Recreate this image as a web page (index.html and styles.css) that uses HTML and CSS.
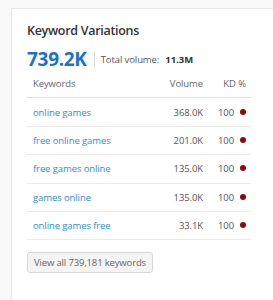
FILE: index.html
```html
<!DOCTYPE html>
<html>
<head>
<meta charset="utf-8">
<link rel="stylesheet" href="styles.css">
</head>
<body>
<div class="card">
  <h2 class="title">Keyword Variations</h2>
  <div class="summary">
    <span class="big">739.2K</span>
    <span class="sep"></span>
    <span class="label">Total volume:</span>
    <span class="total">11.3M</span>
  </div>
  <table class="kw">
    <thead>
      <tr><th class="c-kw">Keywords</th><th class="c-vol">Volume</th><th class="c-kd">KD %</th></tr>
    </thead>
    <tbody>
      <tr><td class="c-kw"><a>online games</a></td><td class="c-vol">368.0K</td><td class="c-kd">100<span class="dot"></span></td></tr>
      <tr><td class="c-kw"><a>free online games</a></td><td class="c-vol">201.0K</td><td class="c-kd">100<span class="dot"></span></td></tr>
      <tr><td class="c-kw"><a>free games online</a></td><td class="c-vol">135.0K</td><td class="c-kd">100<span class="dot"></span></td></tr>
      <tr><td class="c-kw"><a>games online</a></td><td class="c-vol">135.0K</td><td class="c-kd">100<span class="dot"></span></td></tr>
      <tr><td class="c-kw"><a>online games free</a></td><td class="c-vol">33.1K</td><td class="c-kd">100<span class="dot"></span></td></tr>
    </tbody>
  </table>
  <button class="btn">View all 739,181 keywords</button>
</div>
</body>
</html>
```
FILE: styles.css
```css
html, body { margin: 0; padding: 0; }
body {
  background: #f9f9f9;
  font-family: "Open Sans", "Noto Sans", sans-serif;
  color: #333;
  height: 300px;
  overflow: hidden;
}
.card {
  box-sizing: border-box;
  margin: 8px 0 0 11px;
  background: #fff;
  border-top: 1px solid #e6e6e6;
  border-left: 1px solid #e6e6e6;
  padding: 13px 0 0 15px;
  height: 292px;
}
.title {
  margin: 0;
  font-size: 12.5px;
  font-weight: 600;
  line-height: 18px;
  color: #333;
  letter-spacing: -0.3px;
}
.summary {
  display: flex;
  align-items: center;
  margin-top: 8px;
  height: 22px;
}
.big {
  font-size: 19px;
  font-weight: 700;
  color: #1a73c4;
  letter-spacing: -0.3px;
  line-height: 22px;
}
.sep {
  width: 1px;
  height: 15px;
  background: #d8d8d8;
  margin: 0 6px 0 7px;
}
.label {
  font-size: 9.5px;
  color: #555;
  letter-spacing: -0.1px;
}
.total {
  font-size: 9.5px;
  font-weight: 700;
  color: #333;
  margin-left: 6px;
}
.kw {
  width: 224px;
  border-collapse: collapse;
  margin-top: 0;
  font-size: 9.5px;
  letter-spacing: -0.1px;
}
.kw th {
  font-weight: 400;
  color: #666;
  height: 27.4px;
  border-bottom: 1px solid #e0e0e0;
  padding: 0;
}
.kw td {
  height: 27.4px;
  border-bottom: 1px solid #ebebeb;
  padding: 0;
  color: #555;
}
.c-kw { text-align: left; padding-left: 6px !important; }
.c-vol { text-align: right; }
.c-kd { text-align: right; width: 43px; padding-right: 5px !important; white-space: nowrap; }
.kw a { color: #2f8dd1; }
.dot {
  display: inline-block;
  width: 6px;
  height: 6px;
  border-radius: 50%;
  background: #8b0a0a;
  margin-left: 6px;
  vertical-align: 1px;
}
.btn {
  display: block;
  margin-top: 12px;
  height: 21px;
  padding: 0 6px;
  font-family: inherit;
  font-size: 9.5px;
  letter-spacing: -0.15px;
  color: #666;
  background: #f4f4f4;
  border: 1px solid #d6d6d6;
  border-radius: 3px;
}
```
